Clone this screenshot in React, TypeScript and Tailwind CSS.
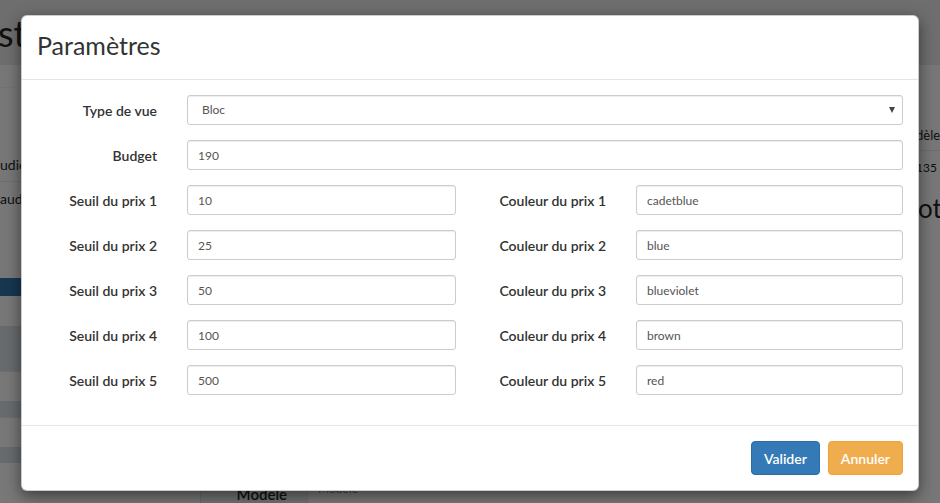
import React from 'react';

const font = { fontFamily: 'Lato, "Noto Sans", sans-serif' };

const inputCls =
  'block h-[30px] w-full rounded-[3px] border border-[#ccc] bg-white px-[10px] text-[12px] text-[#555] shadow-[inset_0_1px_1px_rgba(0,0,0,0.075)] outline-none';

const labelCls = 'pt-[6px] text-right text-[14px] font-semibold leading-[20px] text-[#333]';

const prices = [
  { seuil: '10', couleur: 'cadetblue' },
  { seuil: '25', couleur: 'blue' },
  { seuil: '50', couleur: 'blueviolet' },
  { seuil: '100', couleur: 'brown' },
  { seuil: '500', couleur: 'red' },
];

function Background() {
  return (
    <div className="flex h-[503px] w-[940px] flex-col bg-[#efefef]">
      {/* top bar */}
      <div className="flex h-[65px] items-center bg-[#dcdcdc]">
        <span className="-ml-[2px] text-[36px] leading-none text-[#222]">st</span>
      </div>
      <div className="flex flex-1">
        {/* left column */}
        <div className="flex w-[200px] flex-col pt-[22px]">
          <div className="border-t border-[#e6e6e6]" />
          <div className="h-[60px]" />
          <div className="h-[34px] border-b border-[#ddd] text-[14px] leading-[34px] text-[#222]">udic</div>
          <div className="h-[34px] text-[14px] leading-[34px] text-[#222]">aud</div>
          <div className="h-[62px]" />
          <div className="h-[18px] bg-[#2f6ea3]" />
          <div className="h-[30px] bg-[#efefef]" />
          <div className="h-[45px] bg-[#cfd6dc]" />
          <div className="h-[30px] border-t border-[#ddd] bg-[#f0f0f0]" />
          <div className="h-[16px] bg-[#cfd6dc]" />
          <div className="h-[30px] border-t border-[#ddd] bg-[#f0f0f0]" />
          <div className="h-[16px] bg-[#cfd6dc]" />
          <div className="flex-1 bg-[#f0f0f0]" />
        </div>
        <div className="flex flex-1 flex-col justify-end">
          <div className="flex h-[20px] items-start">
            <div className="flex h-full w-[107px] items-start justify-end border-l border-[#d6d6d6] bg-[#e4e6e8] pr-[20px] text-[15px] font-semibold leading-[22px] text-[#222]">
              Modèle
            </div>
            <div className="h-full w-[413px] border-l border-[#ddd] bg-[#f4f4f4] pl-[10px] text-[12px] leading-[12px] text-[#888]">
              Modele
            </div>
          </div>
        </div>
        {/* right column */}
        <div className="flex w-[220px] flex-col pt-[60px]">
          <div className="h-[26px] border-b border-[#ddd] pl-[196px] text-[13px] leading-[20px] text-[#222]">dèle</div>
          <div className="pl-[196px] pt-[8px] text-[12px] leading-[18px] text-[#222]">135</div>
          <div className="pl-[198px] pt-[16px] text-[26px] leading-[30px] text-[#222]">ota</div>
        </div>
      </div>
    </div>
  );
}

export default function App() {
  return (
    <div className="relative h-[503px] w-[940px] overflow-hidden" style={font}>
      <Background />
      <div className="absolute inset-0 bg-black/50" />

      <div className="absolute left-[21px] top-[15px] w-[898px] rounded-[6px] border border-black/20 bg-white shadow-[0_5px_15px_rgba(0,0,0,0.5)]">
        {/* header */}
        <div className="border-b border-[#e5e5e5] px-[15px] pt-[13px] pb-[17px]">
          <h4 className="text-[25px] leading-[33px] text-[#333]">Paramètres</h4>
        </div>

        {/* body */}
        <div className="px-[15px] pt-[15px] pb-[30px]">
          <div className="grid grid-cols-[120px_269px_120px_1fr] gap-x-[30px] gap-y-[15px]">
            <label className={labelCls}>Type de vue</label>
            <div className="relative col-span-3">
              <select className={inputCls + ' appearance-none pl-[14px]'} defaultValue="Bloc">
                <option>Bloc</option>
                <option>Liste</option>
              </select>
              <span className="pointer-events-none absolute right-[8px] top-[12px] h-0 w-0 border-x-[3px] border-t-[6px] border-x-transparent border-t-[#444]" />
            </div>

            <label className={labelCls}>Budget</label>
            <div className="col-span-3">
              <input className={inputCls} defaultValue="190" />
            </div>

            {prices.map((p, i) => (
              <React.Fragment key={i}>
                <label className={labelCls}>Seuil du prix {i + 1}</label>
                <input className={inputCls} defaultValue={p.seuil} />
                <label className={labelCls}>Couleur du prix {i + 1}</label>
                <input className={inputCls} defaultValue={p.couleur} />
              </React.Fragment>
            ))}
          </div>
        </div>

        {/* footer */}
        <div className="flex justify-end gap-[8px] border-t border-[#e5e5e5] p-[15px]">
          <button className="h-[34px] rounded-[4px] border border-[#2e6da4] bg-[#337ab7] px-[12px] text-[14px] font-semibold text-white">
            Valider
          </button>
          <button className="h-[34px] rounded-[4px] border border-[#eea236] bg-[#f0ad4e] px-[12px] text-[14px] font-semibold text-white">
            Annuler
          </button>
        </div>
      </div>
    </div>
  );
}
